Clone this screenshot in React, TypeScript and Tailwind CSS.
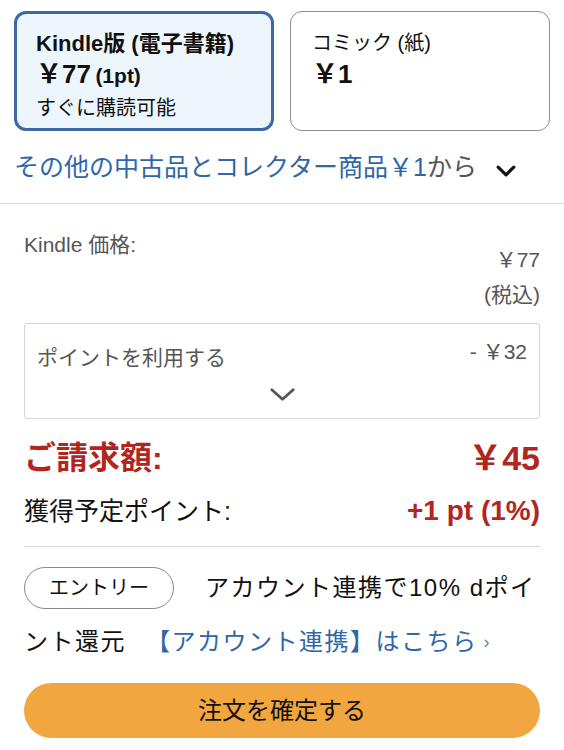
const font = "font-['Liberation_Sans','Noto_Sans_CJK_JP',sans-serif]";

function FormatCard({
  selected,
  children,
}: {
  selected?: boolean;
  children: React.ReactNode;
}) {
  return (
    <div
      className={
        selected
          ? "h-[120px] rounded-[12px] border-[3px] border-[#3a69a3] bg-[#edf5fd] px-[19px] pt-[14px]"
          : "h-[120px] rounded-[12px] border border-[#8e8e8e] bg-white px-[21px] pt-[16px]"
      }
    >
      {children}
    </div>
  );
}

function Chevron({ w, h, stroke, color }: { w: number; h: number; stroke: number; color: string }) {
  return (
    <svg width={w} height={h} viewBox={`0 0 ${w} ${h}`}>
      <polyline
        points={`${stroke},${stroke} ${w / 2},${h - stroke} ${w - stroke},${stroke}`}
        fill="none"
        stroke={color}
        strokeWidth={stroke}
        strokeLinecap="round"
        strokeLinejoin="round"
      />
    </svg>
  );
}

export default function App() {
  return (
    <div className={`w-[564px] bg-white text-[#111] ${font}`}>
      {/* format swatches */}
      <div className="px-[14px] pt-[11px]">
        <div className="grid grid-cols-2 gap-4">
          <FormatCard selected>
            <div className="text-[22px] font-bold leading-[31px]">Kindle版 (電子書籍)</div>
            <div className="font-bold leading-[31px]">
              <span className="text-[26px]">￥77</span>{" "}
              <span className="text-[21px]">(1pt)</span>
            </div>
            <div className="text-[20px] leading-[31px]">すぐに購読可能</div>
          </FormatCard>
          <FormatCard>
            <div className="text-[20px] leading-[30px]">コミック (紙)</div>
            <div className="text-[26px] font-bold leading-[33px]">￥1</div>
          </FormatCard>
        </div>

        <div className="flex h-[72px] items-center">
          <span className="text-[25px] leading-[30px] text-[#2f67a8]">
            その他の中古品とコレクター商品￥1
            <span className="text-[#555]">から</span>
          </span>
          <div className="ml-[18px] mt-[8px]">
            <Chevron w={22} h={14} stroke={3.2} color="#111" />
          </div>
        </div>
      </div>

      <div className="border-t border-[#dcdcdc] px-[24px] pt-[26px]">
        {/* price row */}
        <div className="flex items-start justify-between text-[21px] text-[#555]">
          <span className="leading-[30px]">Kindle 価格:</span>
          <div className="mt-[12px] text-right leading-[35px]">
            <div>￥77</div>
            <div>(税込)</div>
          </div>
        </div>

        {/* points box */}
        <div className="mt-[11px] flex h-[96px] flex-col rounded-[3px] border border-[#d5d5d5] px-[12px] pt-[16px] text-[21px] text-[#555]">
          <div className="flex items-start justify-between">
            <span className="mt-[6px] leading-[24px]">ポイントを利用する</span>
            <span className="leading-[24px]">- ￥32</span>
          </div>
          <div className="mt-[17px] flex justify-center">
            <Chevron w={27} h={15} stroke={2.8} color="#555" />
          </div>
        </div>

        {/* total */}
        <div className="mt-[19px] flex items-center justify-between font-bold text-[#b1261f]">
          <span className="text-[32px] leading-[40px]">ご請求額:</span>
          <span className="text-[34px] leading-[40px]">￥45</span>
        </div>

        <div className="mt-[15px] flex items-center justify-between">
          <span className="text-[25px] leading-[36px] text-[#111]">獲得予定ポイント:</span>
          <span className="text-[28px] font-semibold leading-[36px] text-[#b1261f]">+1 pt (1%)</span>
        </div>

        <div className="mt-[17px] border-t border-[#d5d5d5]" />

        {/* entry promo */}
        <div className="mt-[14px] text-[24px] tracking-[1.5px] text-[#111]">
          <div className="flex h-[54px] items-center">
            <span className="mr-[31px] flex h-[42px] w-[150px] items-center justify-center rounded-full border border-[#8a8a8a] text-[20px] tracking-normal">
              エントリー
            </span>
            <span>アカウント連携で10% dポイ</span>
          </div>
          <div className="flex h-[54px] items-center">
            <span>ント還元</span>
            <span className="ml-[20px] text-[#2f67a8]">【アカウント連携】はこちら</span>
            <span className="ml-[6px] text-[18px] text-[#6b7f99]">›</span>
          </div>
        </div>

        {/* confirm */}
        <button className="mb-[12px] mt-[14px] flex h-[55px] w-full items-center justify-center rounded-full bg-[#f1a63f] text-[24px] text-[#111]">
          注文を確定する
        </button>
      </div>
    </div>
  );
}
